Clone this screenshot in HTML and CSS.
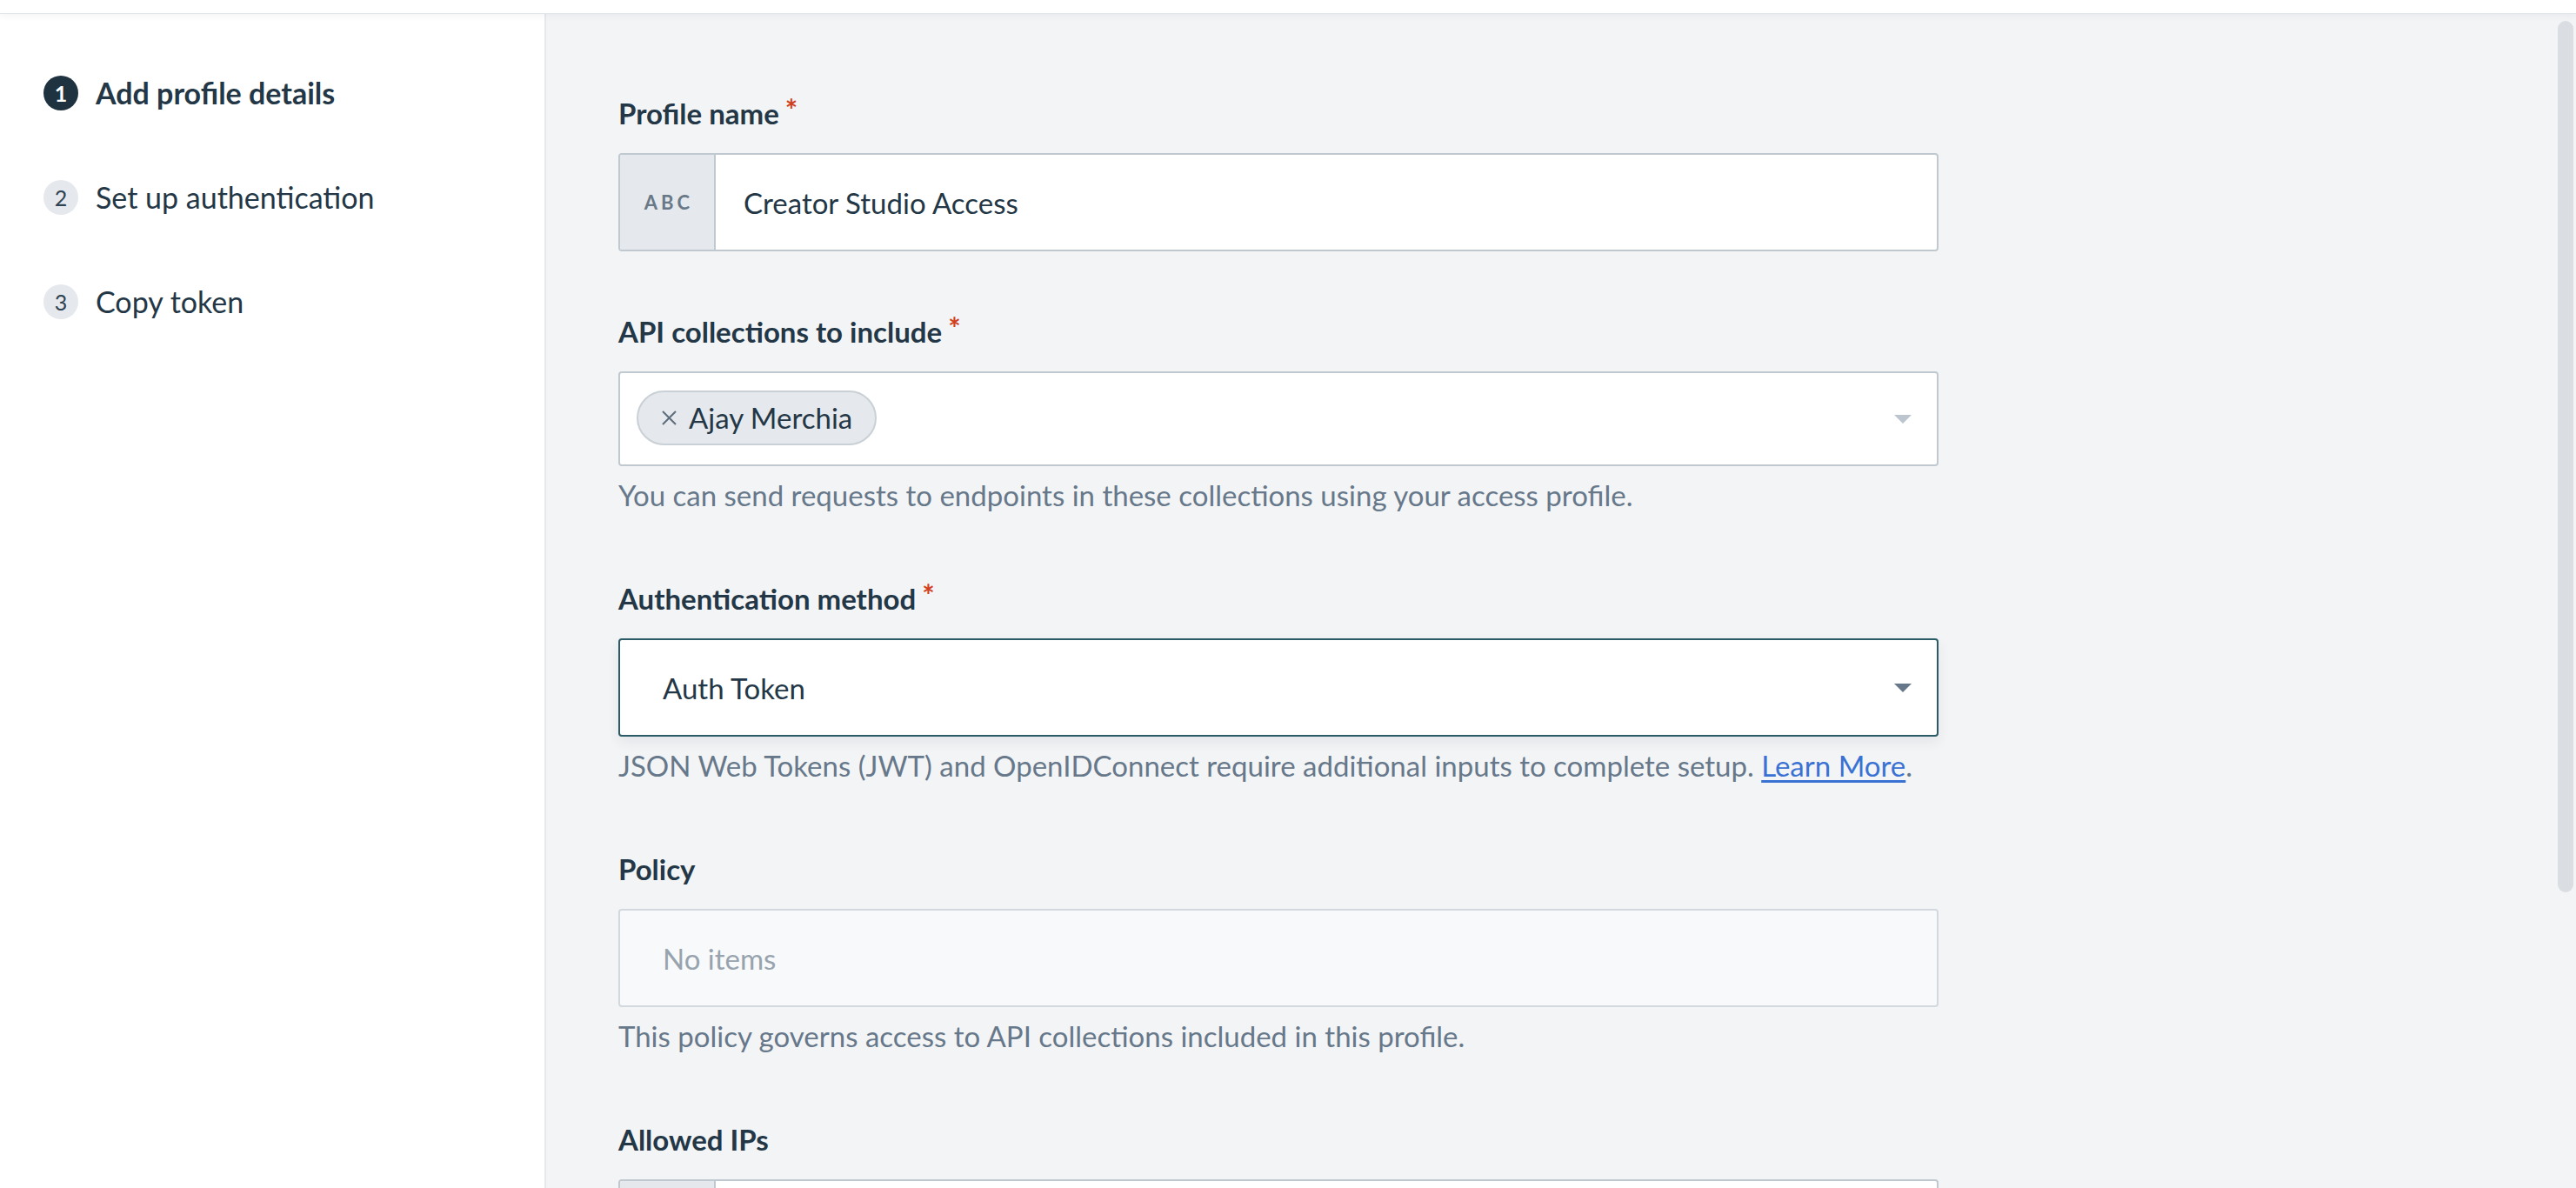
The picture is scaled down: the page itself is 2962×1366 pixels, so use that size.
FILE: index.html
```html
<!DOCTYPE html>
<html lang="en">
<head>
<meta charset="utf-8">
<title>Add profile details</title>
<link rel="stylesheet" href="styles.css">
</head>
<body>
<div class="topbar"></div>
<div class="layout">
  <aside class="sidebar">
    <ol class="steps">
      <li class="step step-active"><span class="step-num">1</span><span class="step-label">Add profile details</span></li>
      <li class="step"><span class="step-num">2</span><span class="step-label">Set up authentication</span></li>
      <li class="step"><span class="step-num">3</span><span class="step-label">Copy token</span></li>
    </ol>
  </aside>
  <main class="content">
    <form class="form">
      <div class="field">
        <div class="label">Profile name<span class="req">*</span></div>
        <div class="box box-group">
          <span class="addon">ABC</span>
          <span class="box-text">Creator Studio Access</span>
        </div>
      </div>
      <div class="field">
        <div class="label">API collections to include<span class="req">*</span></div>
        <div class="box box-tags">
          <span class="chip">
            <svg class="chip-x" width="21" height="21" viewBox="0 0 21 21"><path d="M3 3 L18 18 M18 3 L3 18" stroke="#5d6d7b" stroke-width="2" fill="none"/></svg>
            <span>Ajay Merchia</span>
          </span>
          <svg class="caret" width="20" height="10" viewBox="0 0 20 10"><path d="M0 0 H20 L10 10 Z" fill="#bcc5cd"/></svg>
        </div>
        <div class="help">You can send requests to endpoints in these collections using your access profile.</div>
      </div>
      <div class="field">
        <div class="label">Authentication method<span class="req">*</span></div>
        <div class="box box-select box-focus">
          <span class="box-text">Auth Token</span>
          <svg class="caret" width="20" height="10" viewBox="0 0 20 10"><path d="M0 0 H20 L10 10 Z" fill="#66788a"/></svg>
        </div>
        <div class="help">JSON Web Tokens (JWT) and OpenIDConnect require additional inputs to complete setup. <a class="link" href="#">Learn More</a>.</div>
      </div>
      <div class="field">
        <div class="label">Policy</div>
        <div class="box box-select box-disabled">
          <span class="box-text placeholder">No items</span>
        </div>
        <div class="help">This policy governs access to API collections included in this profile.</div>
      </div>
      <div class="field">
        <div class="label">Allowed IPs</div>
        <div class="box box-group">
          <span class="addon">ABC</span>
          <span class="box-text"></span>
        </div>
      </div>
    </form>
  </main>
  <div class="scrollbar"></div>
</div>
</body>
</html>
```
FILE: styles.css
```css
* { box-sizing: border-box; }
html, body { margin: 0; padding: 0; height: 100%; overflow: hidden; }
body {
  font-family: Lato, "Noto Sans", sans-serif;
  font-size: 33px;
  line-height: 40px;
  color: #233746;
  background: #f3f4f6;
}
.topbar {
  height: 16px;
  background: #ffffff;
  border-bottom: 1px solid #e4e7ea;
  box-shadow: 0 2px 8px rgba(30, 45, 60, 0.06);
  position: relative;
  z-index: 2;
}
.layout {
  display: flex;
  height: calc(100% - 16px);
  position: relative;
}
.sidebar {
  width: 628px;
  flex: none;
  background: #ffffff;
  border-right: 2px solid #e6e9ec;
  padding: 71px 0 0 50px;
}
.steps {
  list-style: none;
  margin: 0;
  padding: 0;
  display: flex;
  flex-direction: column;
  gap: 80px;
}
.step {
  display: flex;
  align-items: center;
  gap: 20px;
  height: 40px;
}
.step-label { font-size: 34px; }
.step-num {
  width: 40px;
  height: 40px;
  border-radius: 50%;
  background: #e5e8ec;
  color: #2f4352;
  font-size: 25px;
  display: flex;
  align-items: center;
  justify-content: center;
  flex: none;
}
.step-active .step-num {
  background: #1f3240;
  color: #ffffff;
  font-weight: 700;
}
.step-active .step-label { font-weight: 700; }
.content {
  flex: 1;
  padding: 94px 0 0 83px;
}
.form {
  width: 1518px;
  display: flex;
  flex-direction: column;
  gap: 72px;
}
.label {
  font-weight: 700;
  margin-bottom: 26px;
}
.req {
  color: #d1401e;
  font-size: 34px;
  margin-left: 7px;
  vertical-align: top;
  line-height: 32px;
}
.box {
  height: 113px;
  border: 2px solid #c0c8d0;
  border-radius: 4px;
  background: #ffffff;
  display: flex;
  align-items: center;
}
.box-group { overflow: hidden; }
.addon {
  width: 110px;
  align-self: stretch;
  background: #e5e8ec;
  border-right: 2px solid #c0c8d0;
  color: #687887;
  font-size: 22px;
  font-weight: 700;
  letter-spacing: 4px;
  display: flex;
  align-items: center;
  justify-content: center;
  padding-left: 4px;
}
.box-group .box-text { padding-left: 32px; }
.box-tags {
  height: 109px;
  padding: 0 29px 0 19px;
  justify-content: space-between;
}
.chip {
  display: flex;
  align-items: center;
  gap: 12px;
  height: 63px;
  padding: 0 26px 0 25px;
  border: 2px solid #c9d0d6;
  border-radius: 32px;
  background: #e5e8ec;
  margin-top: -3px;
}
.box-select {
  padding: 0 29px 0 49px;
  justify-content: space-between;
}
.box-focus {
  border-color: #2b5b67;
  box-shadow: 0 6px 14px rgba(30, 50, 70, 0.08);
}
.box-disabled {
  background: #f8f9fa;
  border-color: #d2d8dd;
}
.placeholder { color: #97a3ae; }
.help {
  color: #66788a;
  margin-top: 13px;
  margin-bottom: 7px;
}
.link {
  color: #3a72d3;
  text-decoration: underline;
  text-underline-offset: 4px;
}
.scrollbar {
  position: absolute;
  right: 3px;
  top: 8px;
  width: 18px;
  height: 1002px;
  background: #dadde2;
  border-radius: 9px;
}
```
